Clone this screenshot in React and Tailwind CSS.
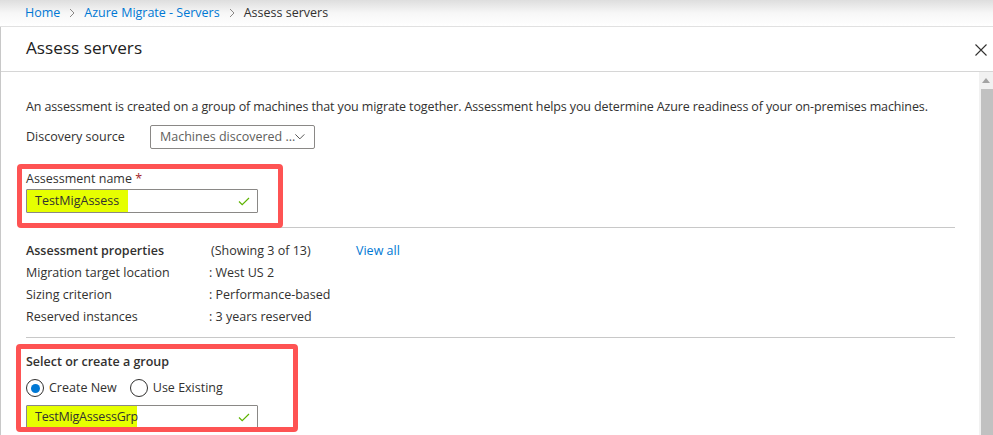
import React from "react";

const Chevron = () => (
  <svg width="8" height="10" viewBox="0 0 8 10" className="mx-[8px]">
    <path d="M2 1 L6 5 L2 9" fill="none" stroke="#8a8886" strokeWidth="1" />
  </svg>
);

const Check = () => (
  <svg width="12" height="9" viewBox="0 0 12 9">
    <path d="M1 4.5 L4.2 7.7 L11 1" fill="none" stroke="#5db300" strokeWidth="1.2" />
  </svg>
);

const Radio = ({ checked }) => (
  <span className="w-[18px] h-[18px] rounded-full border border-[#323130] bg-white flex items-center justify-center shrink-0">
    {checked && <span className="w-[9px] h-[9px] rounded-full bg-[#0078d4]" />}
  </span>
);

export default function App() {
  return (
    <div
      className="w-[993px] h-[435px] overflow-hidden bg-white text-[12.5px] text-[#323130] flex flex-col"
      style={{ fontFamily: '"Segoe UI", "Open Sans", "Noto Sans", sans-serif' }}
    >
      {/* breadcrumb */}
      <div className="h-[27px] shrink-0 bg-gradient-to-b from-[#dedede] via-[#f7f7f7] to-white border-b border-[#e1e1e1] flex items-center pl-[25px] leading-none">
        <span className="text-[#0078d4]">Home</span>
        <Chevron />
        <span className="text-[#0078d4]">Azure Migrate - Servers</span>
        <Chevron />
        <span className="text-[#323130]">Assess servers</span>
      </div>

      {/* panel */}
      <div className="flex-1 flex flex-col border-l border-[#c8c8c8] min-h-0">
        <div className="h-[45px] shrink-0 border-b border-[#d6d6d6] flex items-center justify-between pl-[25px] pr-[6px]">
          <span className="text-[17.2px] leading-none text-[#212121] -mt-[2px]">Assess servers</span>
          <svg width="12" height="12" viewBox="0 0 12 12" className="mt-[1px]">
            <path d="M0.5 0.5 L11.5 11.5 M11.5 0.5 L0.5 11.5" stroke="#323130" strokeWidth="1.1" />
          </svg>
        </div>

        <div className="flex-1 flex min-h-0">
          {/* content */}
          <div className="flex-1 pl-[25px] pr-[24px] pt-[26px] leading-[18px]">
            <p className="whitespace-nowrap tracking-[-0.12px]">
              An assessment is created on a group of machines that you migrate together. Assessment helps you determine Azure readiness of your on-premises machines.
            </p>

            <div className="flex items-center mt-[9px] h-[24px]">
              <span className="w-[124px]">Discovery source</span>
              <div className="w-[165px] h-[24px] border border-[#8a8886] rounded-[2px] flex items-center justify-between pl-[9px] pr-[9px]">
                <span className="text-[#605e5c] whitespace-nowrap">Machines discovered ...</span>
                <svg width="13" height="8" viewBox="0 0 13 8">
                  <path d="M0.5 0.5 L6.5 6.5 L12.5 0.5" fill="none" stroke="#323130" strokeWidth="1.1" />
                </svg>
              </div>
            </div>

            {/* assessment name */}
            <div className="mt-[15px] border-b border-[#c8c8c8]">
              <div className="relative z-10 -ml-[9px] -mb-[1px] w-[266px] border-[5px] border-[#fe5353] rounded-[4px] pl-[4px] pt-[1px] pb-[10px]">
                <div>
                  Assessment name <span className="text-[#a4262c]">*</span>
                </div>
                <div className="mt-[1px] w-[232px] h-[24px] border border-[#8a8886] rounded-[1px] flex items-center justify-between pr-[7px]">
                  <span className="h-full w-[101px] bg-[#e6ff00] flex items-center pl-[8px] whitespace-nowrap">TestMigAssess</span>
                  <Check />
                </div>
              </div>
            </div>

            {/* properties */}
            <div className="pt-[12px] pb-[9px] border-b border-[#c8c8c8] leading-[22px]">
              <div className="flex">
                <span className="w-[185px] font-semibold">Assessment properties</span>
                <span className="w-[145px]">(Showing 3 of 13)</span>
                <span className="text-[#0078d4]">View all</span>
              </div>
              <div className="flex">
                <span className="w-[183px]">Migration target location</span>
                <span>: West US 2</span>
              </div>
              <div className="flex">
                <span className="w-[183px]">Sizing criterion</span>
                <span>: Performance-based</span>
              </div>
              <div className="flex">
                <span className="w-[183px]">Reserved instances</span>
                <span>: 3 years reserved</span>
              </div>
            </div>

            {/* group */}
            <div className="mt-[6px] -ml-[10px] w-[282px] h-[88px] border-[5px] border-[#fe5353] rounded-[4px] pl-[5px] pt-[4px] overflow-hidden">
              <div className="font-semibold">Select or create a group</div>
              <div className="flex items-center mt-[8px] h-[18px]">
                <Radio checked />
                <span className="ml-[5px]">Create New</span>
                <span className="ml-[13px]"><Radio /></span>
                <span className="ml-[5px]">Use Existing</span>
              </div>
              <div className="mt-[8px] w-[232px] h-[24px] border border-[#8a8886] rounded-[1px] flex items-center justify-between pr-[7px]">
                <span className="h-full w-[110px] bg-[#e6ff00] flex items-center pl-[8px] whitespace-nowrap tracking-[-0.2px]">TestMigAssessGrp</span>
                <Check />
              </div>
            </div>
          </div>

          {/* scrollbar */}
          <div className="w-[14px] shrink-0 bg-[#f1f1f1] flex flex-col">
            <div className="h-[17px] flex items-center justify-center">
              <svg width="8" height="5" viewBox="0 0 8 5">
                <path d="M0 5 L4 0 L8 5 Z" fill="#a3a3a3" />
              </svg>
            </div>
            <div className="flex-1 ml-[2px] bg-[#c1c1c1]" />
          </div>
        </div>
      </div>
    </div>
  );
}
